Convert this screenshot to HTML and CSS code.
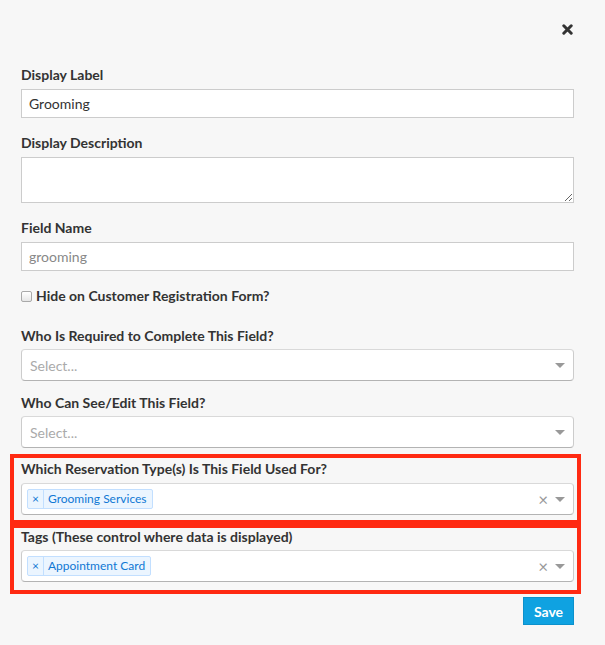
FILE: index.html
```html
<!DOCTYPE html>
<html lang="en">
<head>
<meta charset="utf-8">
<title>Edit Field</title>
<link rel="stylesheet" href="styles.css">
</head>
<body>
<div class="modal">
  <div class="modal-header">
    <button class="close" type="button" aria-label="Close">
      <svg width="11" height="11" viewBox="0 0 11 11"><path d="M1.8 1.8 L9.2 9.2 M9.2 1.8 L1.8 9.2" stroke="#333" stroke-width="3" stroke-linecap="round"/></svg>
    </button>
  </div>
  <form class="form">
    <div class="form-group">
      <label class="control-label">Display Label</label>
      <input class="form-control" type="text" value="Grooming">
    </div>
    <div class="form-group">
      <label class="control-label">Display Description</label>
      <textarea class="form-control textarea"></textarea>
    </div>
    <div class="form-group">
      <label class="control-label">Field Name</label>
      <input class="form-control muted" type="text" value="grooming">
    </div>
    <div class="form-group checkbox-group">
      <label class="checkbox-label"><input type="checkbox" class="checkbox"> Hide on Customer Registration Form?</label>
    </div>
    <div class="form-group select-group">
      <label class="control-label tight">Who Is Required to Complete This Field?</label>
      <div class="select">
        <span class="placeholder">Select...</span>
        <span class="arrow"></span>
      </div>
    </div>
    <div class="form-group select-group last">
      <label class="control-label tight">Who Can See/Edit This Field?</label>
      <div class="select">
        <span class="placeholder">Select...</span>
        <span class="arrow"></span>
      </div>
    </div>
    <div class="highlight first">
      <label class="control-label mid">Which Reservation Type(s) Is This Field Used For?</label>
      <div class="select multi">
        <span class="chip"><span class="chip-x">×</span><span class="chip-label">Grooming Services</span></span>
        <span class="clear">×</span>
        <span class="arrow"></span>
      </div>
    </div>
    <div class="highlight second">
      <label class="control-label mid">Tags (These control where data is displayed)</label>
      <div class="select multi">
        <span class="chip"><span class="chip-x">×</span><span class="chip-label">Appointment Card</span></span>
        <span class="clear">×</span>
        <span class="arrow"></span>
      </div>
    </div>
    <div class="actions">
      <button class="btn-save" type="button">Save</button>
    </div>
  </form>
</div>
</body>
</html>
```
FILE: styles.css
```css
* { box-sizing: border-box; }

body {
  margin: 0;
  background: #f7f7f7;
  font-family: Lato, "Open Sans", sans-serif;
  color: #333;
}

.modal {
  padding: 0 31px 0 21px;
}

.modal-header {
  height: 66px;
  display: flex;
  justify-content: flex-end;
  align-items: flex-start;
  padding-top: 24px;
}

.close {
  width: 11px;
  height: 11px;
  padding: 0;
  margin: 0 1px 0 0;
  border: 0;
  background: none;
  display: block;
}
.close svg { display: block; }

.form-group {
  margin-bottom: 16px;
}

.control-label {
  display: block;
  font-size: 14px;
  font-weight: 700;
  line-height: 18px;
  margin-bottom: 5px;
  color: #333;
}
.control-label.tight { margin-bottom: 4px; }
.control-label.mid { margin-bottom: 5px; }

.form-control {
  display: block;
  width: 100%;
  height: 29px;
  margin: 0;
  padding: 0 7px;
  border: 1px solid #ccc;
  border-radius: 0;
  background: #fff;
  font-family: inherit;
  font-size: 14px;
  color: #333;
  outline: none;
}
.form-control.muted { color: #888; }
.textarea {
  height: 46px;
  resize: vertical;
}

.checkbox-group { margin-bottom: 22px; }
.checkbox-label {
  display: flex;
  align-items: center;
  font-size: 14px;
  font-weight: 700;
  line-height: 18px;
  gap: 4px;
}
.checkbox {
  -webkit-appearance: none;
  appearance: none;
  width: 11px;
  height: 11px;
  margin: 0;
  border: 1px solid #a9a9a9;
  border-radius: 2px;
  background: linear-gradient(#ffffff, #e6e6e6);
}

.select-group { margin-bottom: 13px; }
.select-group.last { margin-bottom: 6px; }

.select {
  position: relative;
  display: flex;
  align-items: center;
  height: 32px;
  background: #fff;
  border: 1px solid #ccc;
  border-color: #d9d9d9 #ccc #b3b3b3;
  border-radius: 4px;
  padding: 0 8px;
  font-size: 14px;
}
.placeholder {
  color: #aaa;
  flex: 1;
}
.arrow {
  width: 0;
  height: 0;
  border-style: solid;
  border-width: 5px 5px 2.5px;
  border-color: #999 transparent transparent;
  margin-left: auto;
  margin-top: 3px;
  margin-right: 0;
}

.multi { padding-left: 5px; }
.chip {
  display: inline-flex;
  align-items: stretch;
  height: 20px;
  border: 1px solid #c2dfff;
  background: #ebf5ff;
  border-radius: 2px;
  color: #0f78d4;
  font-size: 12px;
  line-height: 18px;
}
.chip-x {
  padding: 0 4px;
  border-right: 1px solid #c2dfff;
}
.chip-label { padding: 0 5px 0 4px; }
.clear {
  margin-left: auto;
  margin-right: 7px;
  color: #999;
  font-size: 17px;
  line-height: 1;
}
.multi .arrow { margin-left: 0; }

.highlight {
  border: 4px solid #ff2a12;
  margin: 0 -7px 0 -11px;
}
.highlight.first { padding: 2px 3px 5px 7px; }
.highlight.second { padding: 0 3px 8px 7px; }
.highlight.second .control-label { margin-bottom: 4px; }

.actions {
  display: flex;
  justify-content: flex-end;
  padding-top: 3px;
}
.btn-save {
  width: 51px;
  height: 28px;
  border: 1px solid #0c91cc;
  background: #0fa2e1;
  color: #fff;
  font-family: inherit;
  font-size: 14px;
  font-weight: 700;
  padding: 0;
  border-radius: 0;
}
```
